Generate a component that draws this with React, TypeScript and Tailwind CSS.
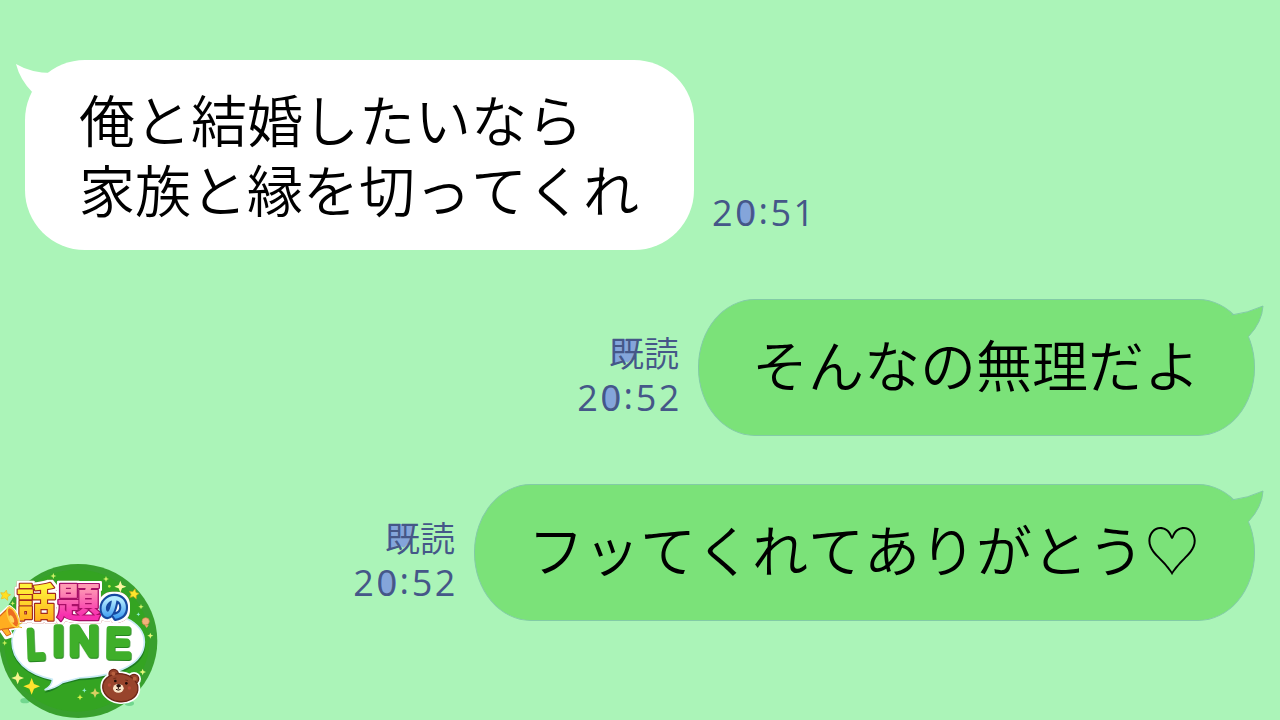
import { clsx } from 'clsx';

type SentProps = {
  text: string;
  time: string;
  className?: string;
};

function Time({ value }: { value: string }) {
  return (
    <p className="flex font-['Open_Sans'] text-[36px] font-normal leading-[46px] tracking-[2.6px] text-[#455788]">
      <span>{value[0]}</span>
      <span className="relative">
        <span className="absolute left-[2px] top-[10px] h-[26px] w-[18px] rounded-[50%] bg-[#84a5da]" />
        <span className="relative">{value[1]}</span>
      </span>
      <span className="-translate-y-0.5">{value[2]}</span>
      <span>{value.slice(3)}</span>
    </p>
  );
}

function SentMessage({ text, time, className }: SentProps) {
  return (
    <div className={clsx('flex justify-end pr-[25px]', className)}>
      <div className="mr-[16px] flex flex-col items-end pt-[30px]">
        <p className="mr-[3px] flex font-['Noto_Sans_CJK_JP',sans-serif] text-[35px] font-[350] leading-[46px] text-[#455788]">
          <span className="relative">
            <span className="absolute left-[2px] top-[10px] h-[27px] w-[27px] bg-[#84a5da] [clip-path:polygon(5%_0,100%_0,90%_60%,62%_88%,42%_78%,5%_98%)]" />
            <span className="relative">既</span>
          </span>
          <span>読</span>
        </p>
        <Time value={time} />
      </div>
      <div className="relative flex h-[137px] items-center rounded-[57px/68px] border border-[#82cba6] bg-[#7be279] pb-[9px] pl-[53px] pr-[54px]">
        <p className="whitespace-nowrap font-['Noto_Sans_CJK_JP',sans-serif] text-[56px] font-[350] leading-[70px] text-black [font-kerning:none]">
          {text}
        </p>
        <svg className="absolute -right-[11px] -top-px h-[50px] w-[46px]" viewBox="0 0 46 50">
          <path d="M8 18 L13 16 Q29 14 44 7 Q43 23 30 37 L24 40 Z" fill="#7be279" />
          <path d="M12.5 16 Q29 14 44 7 Q43 23 30 37" fill="none" stroke="#82cba6" />
        </svg>
      </div>
    </div>
  );
}

function ReceivedMessage({ lines, time }: { lines: string[]; time: string }) {
  return (
    <div className="flex pl-[25px]">
      <div className="relative h-[190px] rounded-[60px] bg-white pl-[54px] pr-[55px] pt-[23px]">
        <svg className="absolute -left-[9px] top-0 h-[50px] w-[50px]" viewBox="0 0 50 50">
          <path d="M0 4 Q15 13 36 13 L44 22 L22 42 L17 33 Q4 20 0 4 Z" fill="white" />
        </svg>
        {lines.map((line) => (
          <p
            key={line}
            className="whitespace-nowrap font-['Noto_Sans_CJK_JP',sans-serif] text-[56px] font-[350] leading-[70px] text-black [font-kerning:none]"
          >
            {line}
          </p>
        ))}
      </div>
      <div className="ml-[18px] pt-[130px]">
        <Time value={time} />
      </div>
    </div>
  );
}

const sparkles = [
  { x: 160, y: 78, r: 9, fill: '#d4f36b' },
  { x: 318, y: 87, r: 9, fill: '#d4f36b' },
  { x: 361, y: 110, r: 18, fill: '#fbf6a0' },
  { x: 423, y: 170, r: 8, fill: '#d4f36b' },
  { x: 415, y: 193, r: 6, fill: '#8df0d2' },
  { x: 451, y: 257, r: 9, fill: '#e3f77a' },
  { x: 428, y: 366, r: 10, fill: '#e3f77a' },
  { x: 14, y: 279, r: 8, fill: '#c8ef58' },
  { x: 38, y: 160, r: 7, fill: '#d4f36b' },
  { x: 53, y: 384, r: 19, fill: '#f6f48c' },
  { x: 95, y: 409, r: 25, fill: '#ffe32e' },
  { x: 240, y: 442, r: 9, fill: '#d8f04a' },
  { x: 253, y: 421, r: 7, fill: '#8df0d2' },
  { x: 285, y: 429, r: 15, fill: '#d9cf62' },
];

const STAR = 'M0 -15 L5 -5 L15 -4 L8 4 L10 14 L0 9 L-10 14 L-8 4 L-15 -4 L-5 -5 Z';

function Logo() {
  return (
    <svg
      className="absolute bottom-0 left-0 h-[170px] w-[180px]"
      viewBox="0 0 540 510"
      fontFamily="'Noto Sans CJK JP', sans-serif"
      fontWeight="900"
    >
      <defs>
        <linearGradient id="yellow" x1="0" y1="0" x2="0" y2="1">
          <stop offset="0.3" stopColor="#fff23a" />
          <stop offset="0.95" stopColor="#ffa81a" />
        </linearGradient>
        <linearGradient id="pink" x1="0" y1="0" x2="0" y2="1">
          <stop offset="0.3" stopColor="#ff9cb4" />
          <stop offset="0.8" stopColor="#f72fae" />
        </linearGradient>
        <linearGradient id="blue" x1="0" y1="0" x2="0" y2="1">
          <stop offset="0.35" stopColor="#b5ebff" />
          <stop offset="0.85" stopColor="#3596f0" />
        </linearGradient>
        {/* white rim with a thin dark edge around the title */}
        <filter id="rim" x="-20%" y="-20%" width="140%" height="140%" colorInterpolationFilters="sRGB">
          <feMorphology in="SourceAlpha" operator="dilate" radius="7" result="outer" />
          <feFlood floodColor="#b8403a" />
          <feComposite in2="outer" operator="in" result="edge" />
          <feMorphology in="SourceAlpha" operator="dilate" radius="5" result="inner" />
          <feFlood floodColor="#ffffff" />
          <feComposite in2="inner" operator="in" result="white" />
          <feMerge>
            <feMergeNode in="edge" />
            <feMergeNode in="white" />
            <feMergeNode in="SourceGraphic" />
          </feMerge>
        </filter>
        <filter id="depth" x="-10%" y="-10%" width="120%" height="120%" colorInterpolationFilters="sRGB">
          <feDropShadow dx="2" dy="3" stdDeviation="0.5" floodColor="#25851f" floodOpacity="1" />
        </filter>
      </defs>

      <ellipse cx="75" cy="452" rx="14" ry="8" fill="#72d78f" />
      <ellipse cx="388" cy="460" rx="14" ry="8" fill="#72d78f" />
      <ellipse cx="235" cy="273" rx="237" ry="231" fill="#38a02e" />
      <ellipse cx="230" cy="272" rx="218" ry="213" fill="#34a422" />

      <path
        d="M236 186 C350 186 436 222 436 284 C436 347 360 385 238 391 L184 404 Q163 424 134 428 Q154 412 155 394 C80 378 33 335 33 280 C33 220 120 186 236 186 Z"
        fill="#1d7c21"
      />
      <path
        d="M236 178 C350 178 433 215 433 276 C433 339 360 377 238 384 L188 397 Q163 416 134 420 Q158 405 157 388 C80 372 36 330 36 274 C36 212 120 178 236 178 Z"
        fill="white"
        stroke="#c9eaf5"
        strokeWidth="5"
      />

      {sparkles.map(({ x, y, r, fill }) => (
        <path
          key={`${x}-${y}`}
          transform={`translate(${x} ${y}) scale(${r})`}
          d="M0 -1 L0.28 -0.28 L1 0 L0.28 0.28 L0 1 L-0.28 0.28 L-1 0 L-0.28 -0.28 Z"
          fill={fill}
        />
      ))}
      <path d={STAR} transform="translate(16 135) rotate(12)" fill="#ffe020" stroke="#e7bb24" strokeWidth="2" />
      <path d={STAR} transform="translate(402 131) rotate(12)" fill="#ffe52c" stroke="#b9a319" strokeWidth="2" />
      <circle cx="328" cy="109" r="4" fill="#b7eb42" />
      <path d="M433 224 L446 226 L440 234 Z" fill="#efa36d" />
      <circle cx="437" cy="214" r="11" fill="#f2b27c" stroke="#c98a45" strokeWidth="2" />

      {/* title */}
      <g strokeLinejoin="round" paintOrder="stroke" filter="url(#rim)">
        <text x="50" y="198" fontSize="117" fill="url(#yellow)" stroke="#a3291d" strokeWidth="7">話</text>
        <text x="170" y="197" fontSize="117" textLength="132" lengthAdjust="spacingAndGlyphs" fill="url(#pink)" stroke="#a80f66" strokeWidth="7">題</text>
        <text x="301" y="202" fontSize="82" fill="url(#blue)" stroke="#1649a0" strokeWidth="13">の</text>
      </g>

      {/* megaphone */}
      <path
        d="M-10 207 L28 171 Q58 190 53 231 L25 237 L34 257 L18 262 L4 241 L-10 241 Z"
        fill="#fff"
        stroke="#fff"
        strokeWidth="12"
        strokeLinejoin="round"
      />
      <path d="M-10 207 L28 171 Q58 190 53 231 L-10 241 Z" fill="#ffad20" stroke="#d9641b" strokeWidth="4" />
      <path d="M5 238 L24 236 L33 252 L20 258 Z" fill="#ffb52b" stroke="#d9641b" strokeWidth="3" />
      <ellipse cx="39" cy="202" rx="13" ry="32" transform="rotate(-24 39 202)" fill="#ed6d20" stroke="#ffd03e" strokeWidth="5" />
      <ellipse cx="35" cy="207" rx="6" ry="12" transform="rotate(-24 35 207)" fill="#ffd55b" />
      <path d="M52 224 L67 218 M54 230 L66 233" stroke="#e6b020" strokeWidth="3" />

      <g
        fontFamily="'Liberation Sans', sans-serif"
        fontWeight="400"
        fontSize="122"
        fill="#3faf2a"
        stroke="#3faf2a"
        strokeWidth="17"
        strokeLinejoin="round"
        filter="url(#depth)"
      >
        <text x="80" y="325" textLength="51" lengthAdjust="spacingAndGlyphs" transform="rotate(-2 100 280)">L</text>
        <text x="158" y="316">I</text>
        <text x="208" y="316">N</text>
        <text x="318" y="321" textLength="73" lengthAdjust="spacingAndGlyphs" transform="rotate(1 355 280)">E</text>
      </g>

      {/* bear */}
      <g stroke="#fff" strokeWidth="14" fill="#fff">
        <circle cx="341" cy="372" r="14" />
        <circle cx="402" cy="387" r="14" />
        <ellipse cx="361" cy="413" rx="53" ry="42" transform="rotate(8 361 413)" />
      </g>
      <g fill="#98442c" stroke="#6b2415" strokeWidth="4">
        <circle cx="341" cy="372" r="14" />
        <circle cx="402" cy="387" r="14" />
        <ellipse cx="361" cy="413" rx="53" ry="42" transform="rotate(8 361 413)" />
      </g>
      <circle cx="340" cy="371" r="6" fill="#b8603f" />
      <circle cx="404" cy="386" r="6" fill="#b8603f" />
      <ellipse cx="355" cy="415" rx="16" ry="13" fill="#fbe3c6" />
      <ellipse cx="356" cy="407" rx="7" ry="5" fill="#2b120d" />
      <path d="M355 411 V418 M348 418 Q355 423 362 418" fill="none" stroke="#2b120d" strokeWidth="3" />
      <circle cx="346" cy="393" r="4" fill="#1e0b08" />
      <circle cx="379" cy="400" r="4" fill="#1e0b08" />
      <path d="M340 386 L349 384 M376 390 L384 392" stroke="#5b2012" strokeWidth="2" />
      <circle cx="328" cy="405" r="5" fill="#b84a38" />
      <circle cx="388" cy="414" r="5" fill="#b84a38" />
    </svg>
  );
}

export default function App() {
  return (
    <main lang="ja" className="relative flex h-[720px] w-[1280px] flex-col overflow-hidden bg-[#abf4b8] pt-[60px]">
      <ReceivedMessage lines={['俺と結婚したいなら', '家族と縁を切ってくれ']} time="20:51" />
      <SentMessage className="mt-[49px]" text="そんなの無理だよ" time="20:52" />
      <SentMessage className="mt-12" text="フッてくれてありがとう♡" time="20:52" />
      <Logo />
    </main>
  );
}
